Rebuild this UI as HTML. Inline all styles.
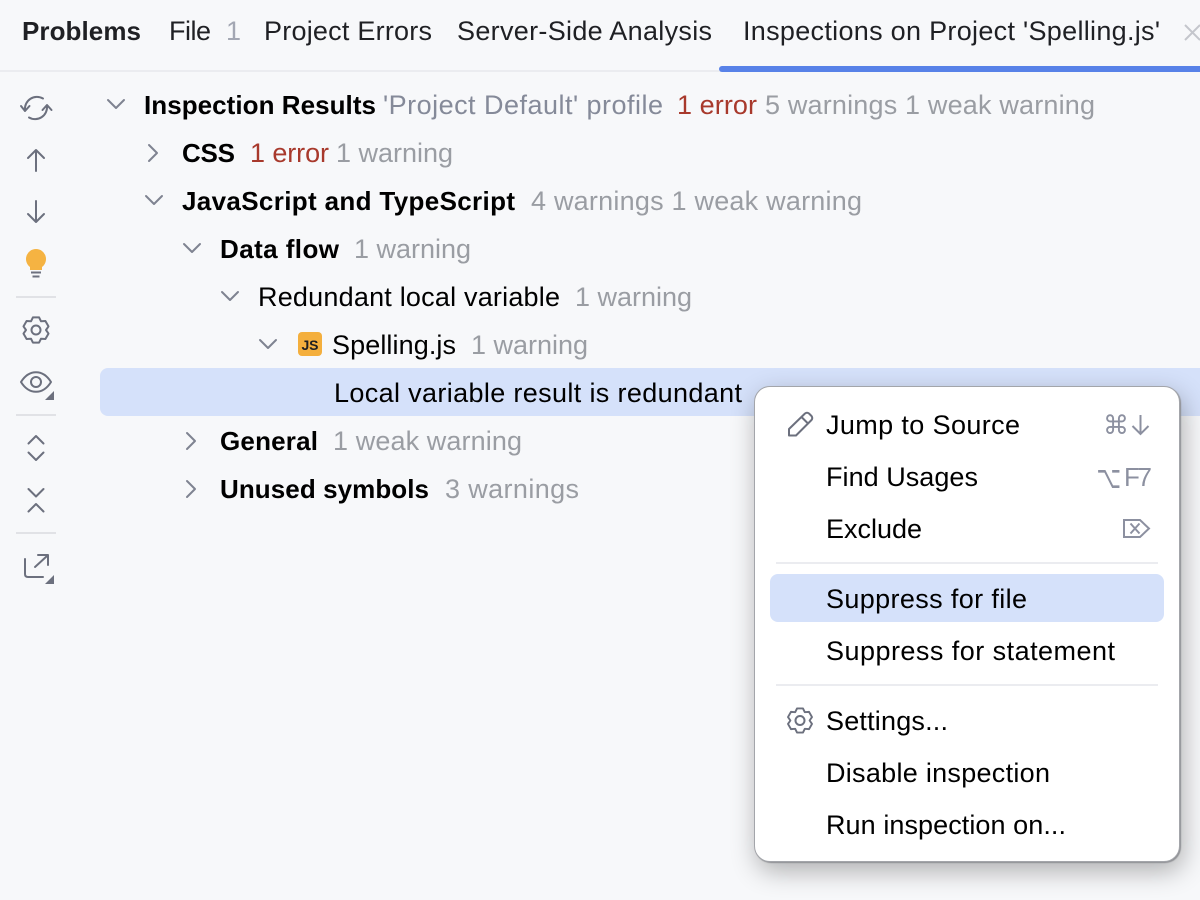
<!DOCTYPE html>
<html lang="en">
<head>
<meta charset="utf-8">
<title>Problems</title>
<style>
html,body{margin:0;padding:0;background:#f7f8fa;width:1200px;height:900px;overflow:hidden}
svg{position:absolute;left:0;top:0}
text{font-family:"Liberation Sans",sans-serif;font-size:27px;fill:#000}
.b{font-weight:bold;font-size:26px}
.g{fill:#9a9da3}
.p{fill:#858a99}
.r{fill:#a8392c}
.t{fill:#1f2024}
.ic{fill:none;stroke:#6c707e;stroke-width:2;stroke-linecap:round;stroke-linejoin:round}
.ch{fill:none;stroke:#7f8391;stroke-width:2;stroke-linecap:round;stroke-linejoin:round}
.s{fill:#8c90a0}
#pop{position:absolute;left:754px;top:386px;width:424px;height:474px;background:#fff;border:1px solid #a3a5aa;border-radius:16px;box-shadow:1px 1px 1px #8f9094,3px 9px 26px rgba(0,0,0,.3)}
</style>
</head>
<body>
<svg width="1200" height="900" viewBox="0 0 1200 900">
<rect x="0" y="70" width="1200" height="2" fill="#ebecf0"/>
<rect x="719" y="66" width="490" height="6" rx="3" fill="#5882e8"/>
<text class="b t" x="22" y="40" textLength="119">Problems</text>
<text class="t" x="169" y="40" textLength="42">File</text>
<text x="226" y="40" textLength="12" style="fill:#a3a7b3">1</text>
<text class="t" x="264" y="40" textLength="168">Project Errors</text>
<text class="t" x="457" y="40" textLength="255">Server-Side Analysis</text>
<text class="t" x="743" y="40" textLength="417">Inspections on Project 'Spelling.js'</text>
<path d="M1185 25L1200 40M1200 25L1185 40" fill="none" stroke="#c4c6cc" stroke-width="2"/>

<!-- toolbar -->
<path class="ic" d="M25 110A12 12 0 0 1 43 98.500M47 106A12 12 0 0 1 29 117.500M21 106L25 111L29.500 106M42.500 110L47 105L51.500 110"/>
<path class="ic" d="M36 171V150M28 158L36 150L44 158"/>
<path class="ic" d="M36 201V222M28 214L36 222L44 214"/>
<path d="M36 249A10 10 0 0 1 42 267V270H30V267A10 10 0 0 1 36 249Z" fill="#f5b342"/>
<path d="M31 272.500H41M32.500 276.500H39.500" fill="none" stroke="#6c707e" stroke-width="2"/>
<rect x="16" y="296" width="40" height="2" fill="#e1e2e6"/>
<g transform="translate(36 330)" class="ic"><path d="M-3.100-12.600H3.100L5-8.700L9.400-9L12.500-3.600L10 0L12.500 3.600L9.400 9L5 8.700L3.100 12.600H-3.100L-5 8.700L-9.400 9L-12.500 3.600L-10 0L-12.500-3.600L-9.400-9L-5-8.700Z"/><circle r="4.500"/></g>
<path class="ic" d="M21 382C29 369 43 369 51 382C43 395 29 395 21 382Z"/><circle class="ic" cx="36" cy="382" r="5"/>
<path d="M54 391V400H45Z" fill="#6c707e"/>
<rect x="16" y="414" width="40" height="2" fill="#e1e2e6"/>
<path class="ic" d="M28.500 443.500L36 436L43.500 443.500M28.500 452.500L36 460L43.500 452.500"/>
<path class="ic" d="M28.500 489L36 496.500L43.500 489M28.500 511.500L36 504L43.500 511.500"/>
<rect x="16" y="532" width="40" height="2" fill="#e1e2e6"/>
<path class="ic" d="M25 559V574Q25 577 28 577H43M35 567L47 556M38 555H48V565"/>
<path d="M54 575V584H45Z" fill="#6c707e"/>

<!-- selection -->
<path d="M108 368H1200V416H108A8 8 0 0 1 100 408V376A8 8 0 0 1 108 368Z" fill="#d5e1fa"/>

<!-- chevrons -->
<path class="ch" d="M108 100L116 108L124 100"/>
<path class="ch" d="M149 145L157 153L149 161"/>
<path class="ch" d="M146 196L154 204L162 196"/>
<path class="ch" d="M184 244L192 252L200 244"/>
<path class="ch" d="M222 292L230 300L238 292"/>
<path class="ch" d="M260 340L268 348L276 340"/>
<path class="ch" d="M187 433L195 441L187 449"/>
<path class="ch" d="M187 481L195 489L187 497"/>

<!-- tree -->
<text class="b" x="144" y="114" textLength="232">Inspection Results</text>
<text class="p" x="383" y="114" textLength="280">'Project Default' profile</text>
<text class="r" x="677" y="114" textLength="80">1 error</text>
<text class="g" x="765" y="114" textLength="330">5 warnings 1 weak warning</text>

<text class="b" x="182" y="162" textLength="53">CSS</text>
<text class="r" x="250" y="162" textLength="79">1 error</text>
<text class="g" x="336" y="162" textLength="117">1 warning</text>

<text class="b" x="182" y="210" textLength="333">JavaScript and TypeScript</text>
<text class="g" x="531" y="210" textLength="331">4 warnings 1 weak warning</text>

<text class="b" x="220" y="258" textLength="119">Data flow</text>
<text class="g" x="354" y="258" textLength="117">1 warning</text>

<text x="258" y="306" textLength="302">Redundant local variable</text>
<text class="g" x="575" y="306" textLength="117">1 warning</text>

<rect x="298" y="332" width="24" height="24" rx="4" fill="#f4af3d"/>
<text x="301.500" y="350" textLength="17" style="font-size:14px;font-weight:bold;fill:#1e1f22">JS</text>
<text x="332" y="354" textLength="124">Spelling.js</text>
<text class="g" x="471" y="354" textLength="117">1 warning</text>

<text x="334" y="402" textLength="408">Local variable result is redundant</text>

<text class="b" x="220" y="450" textLength="98">General</text>
<text class="g" x="333" y="450" textLength="189">1 weak warning</text>

<text class="b" x="220" y="498" textLength="209">Unused symbols</text>
<text class="g" x="445" y="498" textLength="134">3 warnings</text>
</svg>

<div id="pop"></div>

<svg width="1200" height="900" viewBox="0 0 1200 900">
<rect x="770" y="574" width="394" height="48" rx="8" fill="#d5e1fa"/>
<rect x="776" y="562" width="382" height="2" fill="#ebecf0"/>
<rect x="776" y="684" width="382" height="2" fill="#ebecf0"/>

<path class="ic" d="M789 435.500V429L805 413.500Q807 412 809 413.500L811.500 416Q813 418 811.500 420L796 435.500ZM801.500 417L808 423.500"/>
<g transform="translate(800 720.500)" class="ic"><path transform="scale(.96)" d="M-3.100-12.600H3.100L5-8.700L9.400-9L12.500-3.600L10 0L12.500 3.600L9.400 9L5 8.700L3.100 12.600H-3.100L-5 8.700L-9.400 9L-12.500 3.600L-10 0L-12.500-3.600L-9.400-9L-5-8.700Z"/><circle r="4.500"/></g>

<text x="826" y="434" textLength="194">Jump to Source</text>
<text x="826" y="486" textLength="152">Find Usages</text>
<text x="826" y="538" textLength="96">Exclude</text>
<text x="826" y="608" textLength="201">Suppress for file</text>
<text x="826" y="660" textLength="289">Suppress for statement</text>
<text x="826" y="730" textLength="122">Settings...</text>
<text x="826" y="782" textLength="224">Disable inspection</text>
<text x="826" y="834" textLength="240">Run inspection on...</text>

<text class="s" x="1103" y="434" style="font-family:'DejaVu Sans',sans-serif;font-size:26px" textLength="24">⌘</text>
<path d="M1140.500 415V434M1132.500 426L1140.500 434L1148.500 426" fill="none" stroke="#8c90a0" stroke-width="2"/>
<text class="s" transform="translate(1096.500 488) scale(.82 1.2)" style="font-family:'DejaVu Sans',sans-serif;font-size:26px">⌥</text>
<text class="s" x="1124" y="486" style="font-size:26px" textLength="28">F7</text>
<path d="M1124 520H1140L1149 528.500L1140 537H1124ZM1130.500 523.500L1139.500 533.500M1139.500 523.500L1130.500 533.500" fill="none" stroke="#8c90a0" stroke-width="2"/>
</svg>
</body>
</html>
